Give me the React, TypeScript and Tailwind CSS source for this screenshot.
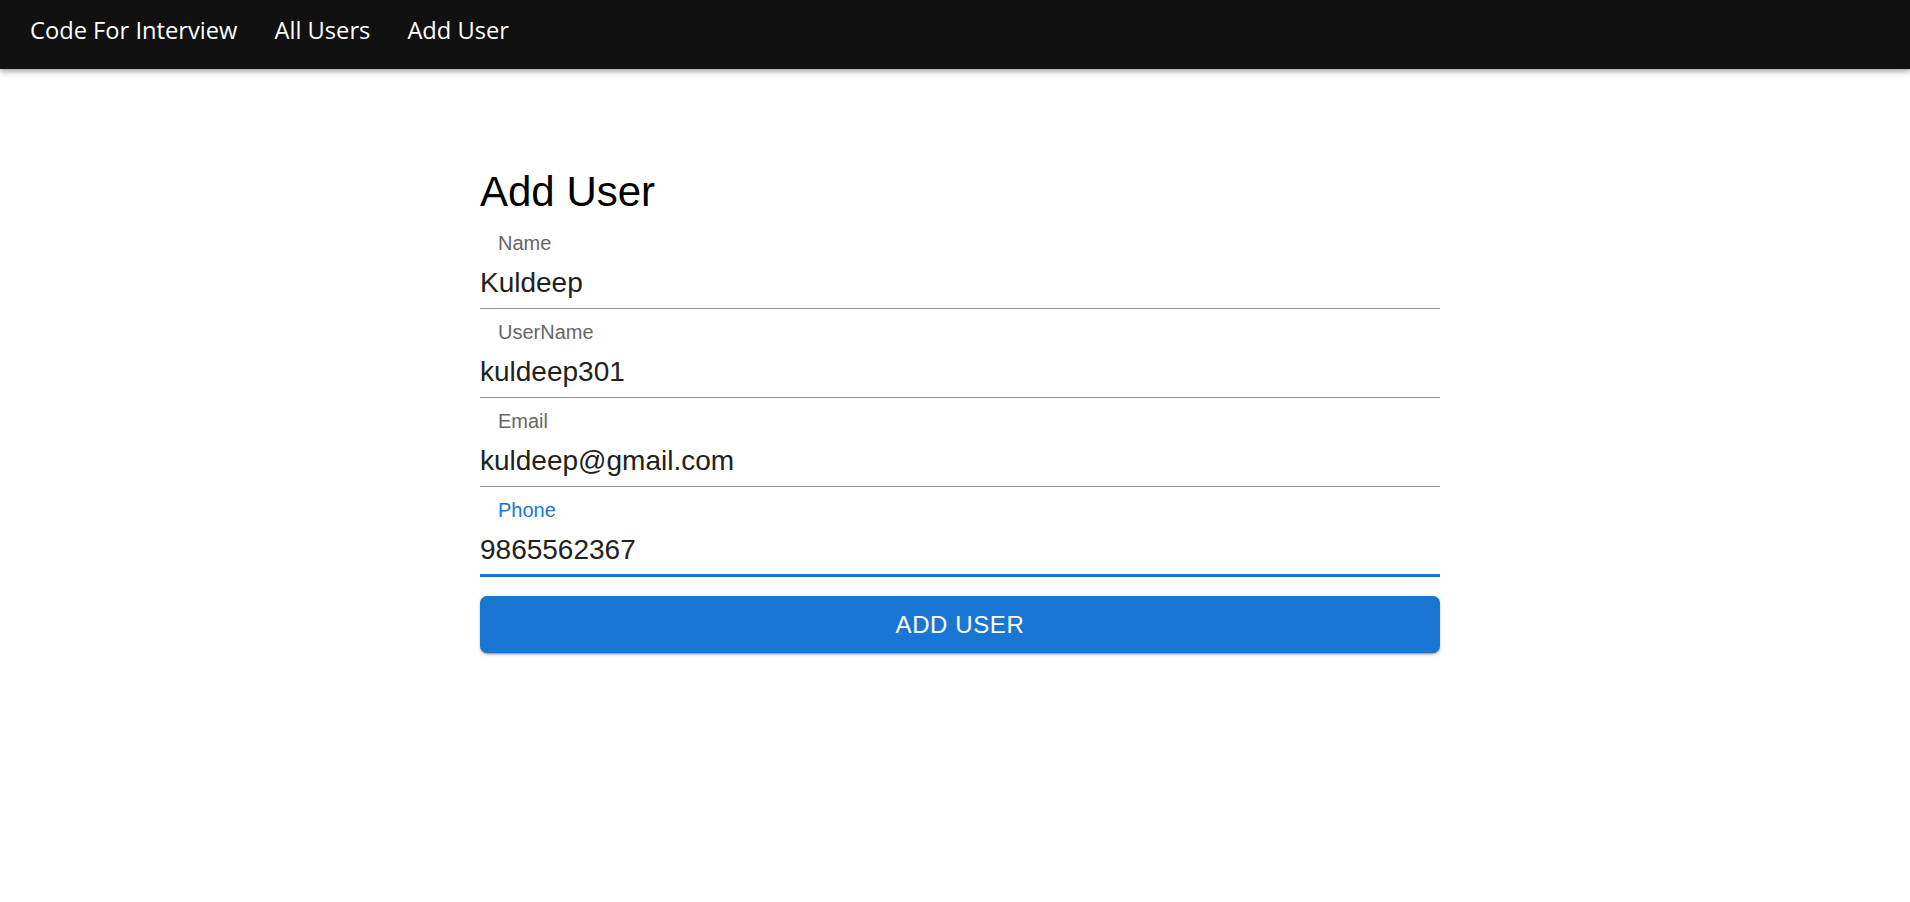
const fields = [
  { label: 'Name', value: 'Kuldeep' },
  { label: 'UserName', value: 'kuldeep301' },
  { label: 'Email', value: 'kuldeep@gmail.com' },
  { label: 'Phone', value: '9865562367', focused: true },
]

function Navbar() {
  return (
    <header className="h-[69px] bg-[#111111] flex items-center pl-[30px] pb-[8px] gap-[37px] text-white text-[23.7px] font-['Open_Sans',sans-serif] shadow-[0_2px_4px_-1px_rgba(0,0,0,0.2),0_4px_5px_0_rgba(0,0,0,0.14),0_1px_10px_0_rgba(0,0,0,0.12)] relative z-10">
      <a className="cursor-pointer">Code For Interview</a>
      <a className="cursor-pointer">All Users</a>
      <a className="cursor-pointer">Add User</a>
    </header>
  )
}

function Field({ label, value, focused }: { label: string; value: string; focused?: boolean }) {
  return (
    <div
      className={
        focused
          ? 'pt-[11px] pb-[8px] border-b-[3px] border-[#1976d2]'
          : 'pt-[11px] pb-[9px] border-b border-[#949494]'
      }
    >
      <div className={`pl-[18px] text-[20px] leading-[24px] ${focused ? 'text-[#1976d2]' : 'text-[#666666]'}`}>
        {label}
      </div>
      <div className="mt-[12px] h-[32px] text-[28px] leading-[32px] text-[#212121]">{value}</div>
    </div>
  )
}

export default function App() {
  return (
    <div className="min-h-screen bg-white font-['Liberation_Sans',Arial,sans-serif]">
      <Navbar />
      <main className="ml-[480px] w-[960px] pt-[98px]">
        <h1 className="text-[42px] leading-[50px] text-black mb-[3px]">Add User</h1>
        {fields.map(f => (
          <Field key={f.label} {...f} />
        ))}
        <button className="mt-[19px] w-full h-[57px] rounded-[7px] bg-[#1976d2] text-white text-[24px] tracking-[0.6px] uppercase shadow-[0_3px_1px_-2px_rgba(0,0,0,0.2),0_2px_2px_0_rgba(0,0,0,0.14),0_1px_5px_0_rgba(0,0,0,0.12)]">
          Add User
        </button>
      </main>
    </div>
  )
}
